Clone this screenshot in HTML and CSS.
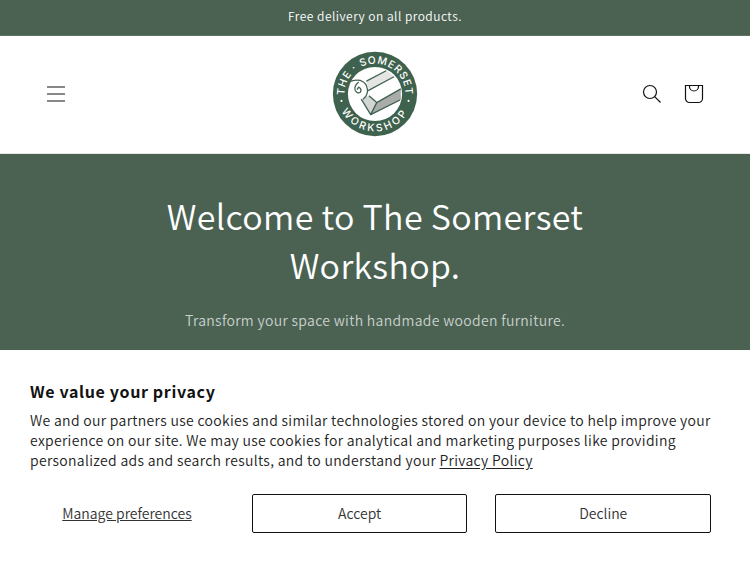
FILE: index.html
```html
<!DOCTYPE html>
<html lang="en">
<head>
  <meta charset="UTF-8" />
  <meta name="viewport" content="width=device-width, initial-scale=1" />
  <title>The Somerset Workshop</title>
  <link rel="stylesheet" href="styles.css">
</head>
<body>

<div class="announcement">
  <p>Free delivery on all products.</p>
</div>

<header class="header">
  <button class="icon-button" type="button" aria-label="Menu">
    <svg class="icon-menu" viewBox="0 0 18 18" width="18" height="18" aria-hidden="true">
      <path d="M0 2h18M0 9h18M0 16h18" />
    </svg>
  </button>

  <a class="logo" href="/" aria-label="The Somerset Workshop">
    <svg viewBox="0 0 100 100" width="86" height="86" aria-hidden="true">
      <defs>
        <path id="arcBottom" d="M6.500 50a43.500 43.500 0 0 0 87 0" />
        <path id="arcTop" d="M24 74.400A35.500 35.500 0 1 1 76 74.400" />
      </defs>
      <circle class="ring" cx="50" cy="50" r="49" />
      <circle class="disc" cx="50" cy="50" r="31.500" />
      <!-- block of wood -->
      <path class="wood-top" d="M40 35L63 23Q68 25 72 30L43 46Z" />
      <path class="wood-light" d="M43 47L73 30L79 43L52 59Z" />
      <path class="wood-side" d="M52 60L80 44V57L45 74Z" />
      <path class="wood-end" d="M34 56L43 52L52 60L45 74Z" />
      <path class="line" d="M40 35L63 23M42 46L72 30M52 60L80 44M45 74L79 57M52 60L45 74L34 56M52 60L43 52" />
      <!-- shaving -->
      <path class="shaving" d="M23 34Q35 31 40 40Q44 50 36 56Q27 52 27 43L32 40L34 46Z" />
      <path class="line" d="M22 35Q35 31 40 40Q44 50 36 56M31 36Q25 41 27 46Q29 50 33 48Q35 44 31 42L29 45" />
      <text class="logo-text"><textPath href="#arcTop" startOffset="50%">THE · SOMERSET</textPath></text>
      <text class="logo-text logo-text-wide"><textPath href="#arcBottom" startOffset="50%">WORKSHOP</textPath></text>
      <circle class="disc" cx="11" cy="58" r="1.200" />
      <circle class="disc" cx="89" cy="58" r="1.200" />
    </svg>
  </a>

  <div class="header-icons">
    <button class="icon-button" type="button" aria-label="Search">
      <svg class="icon-search" viewBox="0 0 20 20" width="20" height="20" aria-hidden="true">
        <circle cx="8" cy="8" r="6.500" />
        <path d="M12.700 12.700L18.500 18.500" />
      </svg>
    </button>
    <a class="icon-button" href="/cart" aria-label="Cart">
      <svg class="icon-cart" viewBox="0 0 20 20" width="20" height="20" aria-hidden="true">
        <path d="M1.500 1.500H18.500V14.500A4 4 0 0 1 14.500 18.500H5.500A4 4 0 0 1 1.500 14.500Z" />
        <path d="M5.500 1.500V2.500A4.500 4.500 0 0 0 14.500 2.500V1.500" />
      </svg>
    </a>
  </div>
</header>

<main>
  <section class="hero">
    <h1>Welcome to The Somerset Workshop.</h1>
    <p>Transform your space with handmade wooden furniture.</p>
  </section>
</main>

<div class="privacy" role="dialog" aria-labelledby="privacyTitle">
  <h2 id="privacyTitle">We value your privacy</h2>
  <p>We and our partners use cookies and similar technologies stored on your device to help improve your experience on our site. We may use cookies for analytical and marketing purposes like providing personalized ads and search results, and to understand your <a href="/policies/privacy-policy">Privacy Policy</a></p>
  <div class="privacy-buttons">
    <button class="link-button" type="button">Manage preferences</button>
    <button class="outline-button" type="button">Accept</button>
    <button class="outline-button" type="button">Decline</button>
  </div>
</div>

</body>
</html>
```
FILE: styles.css
```css
* {
  box-sizing: border-box;
}
body {
  margin: 0;
  font-family: "Noto Sans CJK SC", sans-serif;
  font-weight: 350;
  letter-spacing: 0.02em;
  color: #121212;
  background: #fff;
}
h1, h2, p {
  margin: 0;
}
button {
  font-family: inherit;
  cursor: pointer;
}
.announcement {
  padding: 5px 20px 8px;
  border-bottom: 1px solid #5e7264;
  background: #4b6253;
  color: #fff;
  font-size: 12px;
  letter-spacing: 0.04em;
  line-height: 22px;
  text-align: center;
}
.header {
  display: grid;
  grid-template-columns: 1fr auto 1fr;
  align-items: center;
  padding: 15px 35px 16px;
  border-bottom: 1px solid #e7e7e7;
}
.icon-button {
  display: flex;
  align-items: center;
  justify-content: center;
  width: 42px;
  height: 42px;
  padding: 0;
  border: none;
  background: none;
}
.icon-button svg {
  fill: none;
  stroke: #121212;
  stroke-width: 1.2;
}
.icon-button .icon-menu {
  stroke: #121212;
}
.logo {
  display: block;
}
.logo svg {
  display: block;
}
.header-icons {
  display: flex;
  justify-content: flex-end;
}
.ring {
  fill: #3f624f;
}
.disc {
  fill: #fff;
}
.wood-top {
  fill: #e4e6e5;
}
.wood-light {
  fill: #fff;
}
.wood-side {
  fill: #a9acaa;
}
.wood-end {
  fill: #d3d6d4;
}
.shaving {
  fill: #fff;
}
.line {
  fill: none;
  stroke: #3f624f;
  stroke-width: 1.5;
  stroke-linejoin: round;
}
.logo-text {
  fill: #fff;
  font-family: Inter, sans-serif;
  font-size: 12px;
  font-weight: 500;
  letter-spacing: 1px;
  text-anchor: middle;
}
.logo-text-wide {
  letter-spacing: 3px;
}
.hero {
  min-height: 409px;
  padding: 37px 80px;
  background: #4b6253;
  color: #fff;
  text-align: center;
}
.hero h1 {
  max-width: 540px;
  margin: 0 auto;
  font-size: 34px;
  font-weight: 350;
  line-height: 49px;
}
.hero p {
  margin-top: 20px;
  color: #c9d0cb;
  font-size: 14px;
  line-height: 22px;
}
.privacy {
  position: fixed;
  right: 0;
  bottom: 0;
  left: 0;
  padding: 29px 39px 30px 30px;
  background: #fff;
}
.privacy h2 {
  font-size: 16px;
  font-weight: 700;
  letter-spacing: 0.04em;
  line-height: 24px;
}
.privacy p {
  margin-top: 7px;
  color: #222;
  font-size: 14px;
  line-height: 20px;
}
.privacy a {
  color: inherit;
  text-underline-offset: 2px;
}
.privacy-buttons {
  display: grid;
  grid-template-columns: 9fr 10fr 10fr;
  gap: 28px;
  margin-top: 24px;
}
.privacy-buttons button {
  height: 39px;
  padding: 0 0 2px;
  border: none;
  border-radius: 2px;
  background: none;
  color: #333;
  font-size: 14px;
  font-weight: 350;
}
.privacy-buttons .outline-button {
  border: 1px solid #121212;
}
.privacy-buttons .link-button {
  text-decoration: underline;
}
```
